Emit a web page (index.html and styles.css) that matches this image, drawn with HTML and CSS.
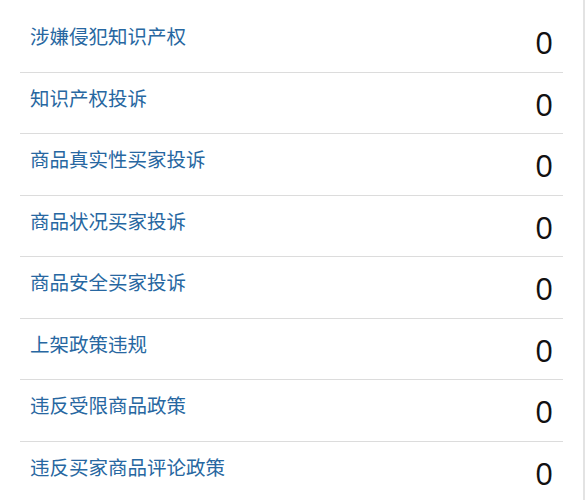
FILE: index.html
```html
<!DOCTYPE html>
<html lang="zh">
<head>
<meta charset="utf-8">
<link rel="stylesheet" href="styles.css">
</head>
<body>
<div class="page">
  <ul class="list">
    <li class="row"><a class="label" href="#">涉嫌侵犯知识产权</a><span class="count">0</span></li>
    <li class="row"><a class="label" href="#">知识产权投诉</a><span class="count">0</span></li>
    <li class="row"><a class="label" href="#">商品真实性买家投诉</a><span class="count">0</span></li>
    <li class="row"><a class="label" href="#">商品状况买家投诉</a><span class="count">0</span></li>
    <li class="row"><a class="label" href="#">商品安全买家投诉</a><span class="count">0</span></li>
    <li class="row"><a class="label" href="#">上架政策违规</a><span class="count">0</span></li>
    <li class="row"><a class="label" href="#">违反受限商品政策</a><span class="count">0</span></li>
    <li class="row"><a class="label" href="#">违反买家商品评论政策</a><span class="count">0</span></li>
  </ul>
</div>
</body>
</html>
```

FILE: styles.css
```css
html, body {
  margin: 0;
  padding: 0;
  background: #fff;
}
body {
  width: 585px;
  height: 500px;
  overflow: hidden;
}
.page {
  box-sizing: border-box;
  width: 585px;
  height: 500px;
  border-right: 2px solid #e3e3e3;
  padding: 11px 20px 0 20px;
}
.list {
  list-style: none;
  margin: 0;
  padding: 0;
  width: 543px;
}
.row {
  box-sizing: content-box;
  height: 60.5px;
  border-bottom: 1px solid #dcdcdc;
  display: flex;
  justify-content: space-between;
  align-items: flex-start;
}
.label {
  font-family: "Noto Sans CJK SC", "Microsoft YaHei", sans-serif;
  font-size: 19.5px;
  line-height: 24px;
  padding: 13px 0 0 10px;
  color: #2767a1;
  text-decoration: none;
}
.count {
  font-family: "Open Sans", "Liberation Sans", sans-serif;
  font-size: 31px;
  line-height: 30px;
  padding: 16px 10px 0 0;
  color: #111;
}
```
